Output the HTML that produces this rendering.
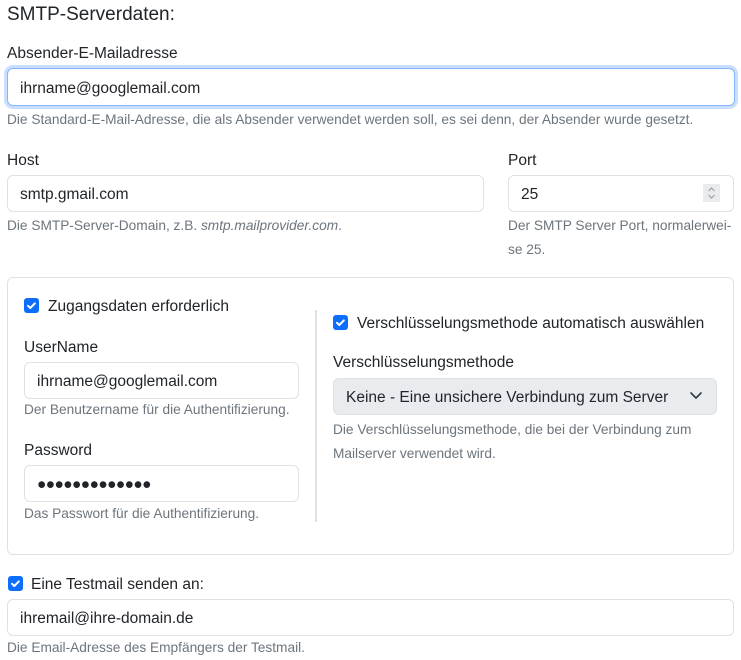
<!DOCTYPE html>
<html><head><meta charset="utf-8"><style>
*{box-sizing:border-box;margin:0;padding:0}
body{width:741px;height:658px;background:#fff;position:relative;overflow:hidden;font-family:"Liberation Sans",sans-serif;color:#212529;font-size:15.5px}
.a{position:absolute;white-space:nowrap}
.l{line-height:20px}
.h{font-size:13.7px;color:#6c757d;line-height:24px}
.in{position:absolute;border:1px solid #dee2e6;border-radius:6px;background:#fff;padding-left:12px;line-height:38px;font-size:15.5px}
.cb{position:absolute;width:15px;height:15px;background:#0d6efd;border-radius:3px}
.cb svg{position:absolute;left:0;top:0}
</style></head><body>
<div class="a" style="left:7px;top:3px;font-size:19px;line-height:24px">SMTP-Serverdaten:</div>
<div class="a l" style="left:7px;top:44px">Absender-E-Mailadresse</div>
<div class="in" style="left:7px;top:68px;width:728px;height:38px;border-color:#86b7fe;box-shadow:0 0 0 3px rgba(13,110,253,.22);line-height:39px">ihrname@googlemail.com</div>
<div class="a h" style="left:7px;top:108px">Die Standard-E-Mail-Adresse, die als Absender verwendet werden soll, es sei denn, der Absender wurde gesetzt.</div>

<div class="a l" style="left:7px;top:151px">Host</div>
<div class="in" style="left:7px;top:175px;width:477px;height:37px">smtp.gmail.com</div>
<div class="a h" style="left:7px;top:214px">Die SMTP-Server-Domain, z.B. <i>smtp.mailprovider.com</i>.</div>

<div class="a l" style="left:508px;top:151px">Port</div>
<div class="in" style="left:508px;top:175px;width:226px;height:37px">25</div>
<div class="a" style="left:703px;top:184px;width:17px;height:18px;background:#e9ecef"><svg width="17" height="18"><path d="M5.5 7l3-3 3 3M5.5 11l3 3 3-3" stroke="#999" stroke-width="1" fill="none"/></svg></div>
<div class="a h" style="left:508px;top:214px">Der SMTP Server Port, normalerwei-</div>
<div class="a h" style="left:508px;top:238px">se 25.</div>

<div class="a" style="left:7px;top:277px;width:727px;height:278px;border:1px solid #dee2e6;border-radius:6px"></div>
<div class="cb" style="left:24px;top:298px"><svg width="15" height="15"><path d="M4 7.8l2.3 2.2 4.5-4.6" stroke="#fff" stroke-width="2" fill="none" stroke-linecap="round" stroke-linejoin="round"/></svg></div>
<div class="a l" style="left:48px;top:297px">Zugangsdaten erforderlich</div>
<div class="a l" style="left:24px;top:338px">UserName</div>
<div class="in" style="left:24px;top:362px;width:275px;height:37px">ihrname@googlemail.com</div>
<div class="a h" style="left:24px;top:398px">Der Benutzername für die Authentifizierung.</div>
<div class="a l" style="left:24px;top:441px">Password</div>
<div class="in" style="left:24px;top:465px;width:275px;height:37px;letter-spacing:-0.6px">&#9679;&#9679;&#9679;&#9679;&#9679;&#9679;&#9679;&#9679;&#9679;&#9679;&#9679;&#9679;&#9679;</div>
<div class="a h" style="left:24px;top:502px">Das Passwort für die Authentifizierung.</div>
<div class="a" style="left:315px;top:310px;width:2px;height:212px;background:#dee2e6"></div>

<div class="cb" style="left:333px;top:315px"><svg width="15" height="15"><path d="M4 7.8l2.3 2.2 4.5-4.6" stroke="#fff" stroke-width="2" fill="none" stroke-linecap="round" stroke-linejoin="round"/></svg></div>
<div class="a l" style="left:357px;top:314px">Verschlüsselungsmethode automatisch auswählen</div>
<div class="a l" style="left:333px;top:353px">Verschlüsselungsmethode</div>
<div class="in" style="left:333px;top:378px;width:384px;height:37px;background:#e9ecef;overflow:hidden;padding-right:40px">Keine - Eine unsichere Verbindung zum Server aufbauen</div>
<div class="a" style="left:683px;top:379px;width:33px;height:35px;background:#e9ecef;border-radius:0 5px 5px 0"><svg width="33" height="35"><path d="M8 14l5 5 5-5" stroke="#343a40" stroke-width="1.6" fill="none" stroke-linecap="round" stroke-linejoin="round"/></svg></div>
<div class="a h" style="left:333px;top:418px">Die Verschlüsselungsmethode, die bei der Verbindung zum</div>
<div class="a h" style="left:333px;top:442px">Mailserver verwendet wird.</div>

<div class="cb" style="left:8px;top:576px"><svg width="15" height="15"><path d="M4 7.8l2.3 2.2 4.5-4.6" stroke="#fff" stroke-width="2" fill="none" stroke-linecap="round" stroke-linejoin="round"/></svg></div>
<div class="a l" style="left:31px;top:575px">Eine Testmail senden an:</div>
<div class="in" style="left:7px;top:599px;width:727px;height:37px">ihremail@ihre-domain.de</div>
<div class="a h" style="left:7px;top:636px">Die Email-Adresse des Empfängers der Testmail.</div>
</body></html>
